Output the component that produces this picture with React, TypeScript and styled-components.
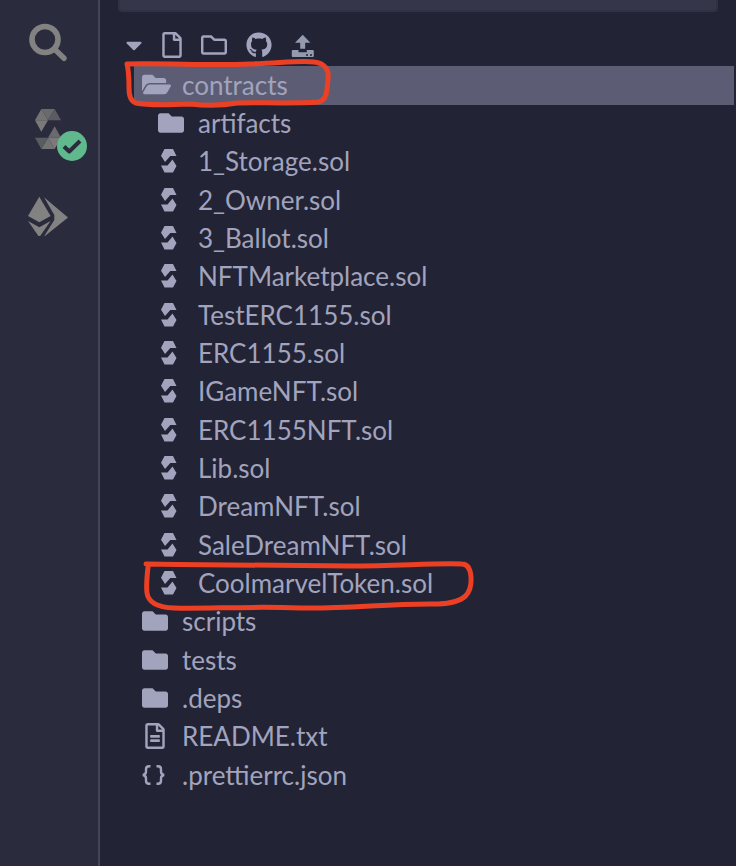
import React from "react";
import styled, { createGlobalStyle } from "styled-components";
import { FaCaretDown, FaFolder, FaFolderOpen, FaGithub, FaRegFile, FaRegFileAlt, FaRegFolder } from "react-icons/fa";

const GlobalStyle = createGlobalStyle`
  * { box-sizing: border-box; }
  body {
    margin: 0;
    background: #222335;
    color: #a2a3bd;
    font-family: "Lato", "Open Sans", sans-serif;
  }
  button { border: 0; background: none; color: inherit; font: inherit; padding: 0; cursor: pointer; }
`;

const Layout = styled.div`
  display: flex;
  min-height: 100vh;
`;

const IconRail = styled.nav`
  display: flex;
  flex-direction: column;
  align-items: flex-start;
  gap: 44px;
  flex: 0 0 100px;
  padding: 22px 0 0 26px;
  background: #2b2b3e;
  border-right: 2px solid #444558;
`;

const RailButton = styled.button`
  position: relative;
  width: 44px;
  height: 42px;
  color: #828282;
  svg { display: block; }
`;

const StatusBadge = styled.span`
  position: absolute;
  left: 31px;
  top: 23px;
  width: 30px;
  height: 30px;
`;

const Explorer = styled.main`
  flex: 1;
  min-width: 0;
`;

const WorkspaceBar = styled.div`
  height: 12px;
  margin: 0 18px;
  background: #35364a;
  border: 2px solid #2d3244;
  border-top: 0;
  border-radius: 0 0 4px 4px;
`;

const Toolbar = styled.div`
  display: flex;
  align-items: center;
  height: 54px;
  padding: 12px 0 0 26px;
`;

const ToolButton = styled.button<{ $width: number; $gap: number }>`
  display: flex;
  justify-content: center;
  width: ${(p) => p.$width}px;
  margin-right: ${(p) => p.$gap}px;
  svg { flex: none; display: block; }
`;

const Tree = styled.ul`
  list-style: none;
  margin: 0;
  padding: 0 2px 0 34px;
`;

const TreeItem = styled.li`
  position: relative;
`;

const TreeRow = styled.button<{ $depth: number; $selected?: boolean }>`
  display: flex;
  align-items: center;
  width: 100%;
  height: 38px;
  padding: 0 0 2px ${(p) => 8 + p.$depth * 16}px;
  background: ${(p) => (p.$selected ? "#5c5d74" : "transparent")};
  font-size: 26px;
  line-height: 36px;
  text-align: left;
  white-space: nowrap;
  ${TreeItem}:nth-child(3n + 1) > & { height: 39px; }
`;

const RowIcon = styled.span`
  display: flex;
  flex: 0 0 40px;
  svg { display: block; }
`;

const Marker = styled.svg`
  position: absolute;
  z-index: 1;
  pointer-events: none;
  fill: none;
  stroke: #ec4025;
  stroke-width: 5;
  stroke-linecap: round;
  stroke-linejoin: round;
`;

const ContractsMarker = styled(Marker)`
  left: -12px;
  top: -10px;
`;

const TokenMarker = styled(Marker)`
  left: 6px;
  top: -8px;
`;

const SearchIcon = () => (
  <svg width="44" height="42" viewBox="26 22 44 42" fill="none" stroke="currentColor">
    <circle cx="45" cy="39.5" r="13" strokeWidth="5.6" />
    <path d="M54.5 49 64 58.3" strokeWidth="5.4" strokeLinecap="round" />
  </svg>
);

const CompilerIcon = () => (
  <svg width="44" height="42" viewBox="26 108 44 42">
    <path fill="#737374" d="M41.3 109 48 120.3H35z" />
    <path fill="#6a6a6e" d="M41.3 109h13.4L48 120.3z" />
    <path fill="#5b5b62" d="M54.7 109 61 120.3H48z" />
    <path fill="#7a7a7a" d="M35 120.3h13l-6.7 11.4z" />
    <path fill="#6a6a6e" d="M54.7 126.3 61 137.7H48z" />
    <path fill="#7a7a7a" d="M61 137.7 54.7 149 48 137.7z" />
    <path fill="#737374" d="M48 137.7 54.7 149H41.3z" />
    <path fill="#5b5b62" d="M35 137.7h13L41.3 149z" />
  </svg>
);

const CheckBadge = () => (
  <svg width="30" height="30" viewBox="0 0 30 30">
    <circle cx="15" cy="15" r="15" fill="#5fb98d" />
    <path d="m7 15.500 5.300 5L23 10" fill="none" stroke="#2b2b3e" strokeWidth="4" strokeLinejoin="round" />
  </svg>
);

const DeployIcon = () => (
  <svg width="44" height="42" viewBox="26 194 44 42" fill="currentColor">
    <path d="M39.300 196.800 50.600 216l-11.300 6.300L28 216z" />
    <path d="m28 221 11.300 6.300L50.600 221l-11.300 16.200z" />
    <path d="M44 197.300 68 217.500 43.700 237l10.600-17v-5z" />
  </svg>
);

const UploadIcon = () => (
  <svg width="24" height="26" viewBox="291 33 24 26" fill="#959baf">
    <path d="m302.700 35.700 7.700 8H305.200v6h-5v-6H295z" />
    <path fillRule="evenodd" d="M292.500 51h6v2.300h8.300V51h6q1 0 1 1v5q0 1-1 1h-20q-1 0-1-1v-5q0-1 1-1zm13.500 4.300v1.500h2v-1.500zm4 0v1.500h2v-1.500z" />
  </svg>
);

const SolidityIcon = () => (
  <svg width="22" height="24" viewBox="-3 0 22 24" fill="currentColor">
    <path d="M3.500 0h8.500l3.500 7H9.300L4 13 0 6.700z" />
    <path d="M11.500 10.500 15.500 17l-3.500 6.500H3.500L0 16.500h6.500z" />
  </svg>
);

const BracesIcon = () => (
  <svg width="24" height="20" viewBox="0 0 24 20" fill="none" stroke="currentColor" strokeWidth="2.400">
    <path d="M8.500 1.300H7q-3 0-3 3v2.500Q4 9.500.8 10q3.200.500 3.200 3.200v2.500q0 3 3 3h1.500" />
    <path d="M14.500 1.300H16q3 0 3 3v2.500q0 2.700 3.200 3.200-3.200.500-3.200 3.200v2.500q0 3-3 3h-1.500" />
  </svg>
);

type Kind = "open" | "folder" | "sol" | "text" | "json";

const icons: Record<Kind, React.ReactNode> = {
  open: <FaFolderOpen size={29} />,
  folder: <FaFolder size={26} />,
  sol: <SolidityIcon />,
  text: <FaRegFileAlt width={20} height={26} />,
  json: <BracesIcon />,
};

const entries: { name: string; kind: Kind; depth: number }[] = [
  { name: "contracts", kind: "open", depth: 0 },
  { name: "artifacts", kind: "folder", depth: 1 },
  ...[
    "1_Storage.sol", "2_Owner.sol", "3_Ballot.sol", "NFTMarketplace.sol", "TestERC1155.sol", "ERC1155.sol",
    "IGameNFT.sol", "ERC1155NFT.sol", "Lib.sol", "DreamNFT.sol", "SaleDreamNFT.sol", "CoolmarvelToken.sol",
  ].map((name) => ({ name, kind: "sol" as Kind, depth: 1 })),
  { name: "scripts", kind: "folder", depth: 0 },
  { name: "tests", kind: "folder", depth: 0 },
  { name: ".deps", kind: "folder", depth: 0 },
  { name: "README.txt", kind: "text", depth: 0 },
  { name: ".prettierrc.json", kind: "json", depth: 0 },
];

export default function App() {
  return (
    <>
      <GlobalStyle />
      <Layout>
        <IconRail aria-label="Plugins">
          <RailButton aria-label="Search"><SearchIcon /></RailButton>
          <RailButton aria-label="Solidity compiler">
            <CompilerIcon />
            <StatusBadge><CheckBadge /></StatusBadge>
          </RailButton>
          <RailButton aria-label="Deploy and run"><DeployIcon /></RailButton>
        </IconRail>
        <Explorer>
          <WorkspaceBar />
          <Toolbar>
            <ToolButton $width={16} $gap={20} aria-label="Collapse"><FaCaretDown size={26} /></ToolButton>
            <ToolButton $width={20} $gap={18} aria-label="New file"><FaRegFile size={26} /></ToolButton>
            <ToolButton $width={28} $gap={18} aria-label="New folder"><FaRegFolder size={26} /></ToolButton>
            <ToolButton $width={26} $gap={19} aria-label="Publish to GitHub"><FaGithub size={26} /></ToolButton>
            <ToolButton $width={24} $gap={0} aria-label="Upload"><UploadIcon /></ToolButton>
          </Toolbar>
          <Tree>
            {entries.map(({ name, kind, depth }) => (
              <TreeItem key={name}>
                <TreeRow $depth={depth} $selected={name === "contracts"}>
                  <RowIcon>{icons[kind]}</RowIcon>
                  {name}
                </TreeRow>
                {name === "contracts" && (
                  <ContractsMarker width="214" height="56" viewBox="122 56 214 56">
                    <path d="M127 64C170 63 210 66 250 64C280 63 302 60 314 62Q330 64 328 79C327 93 326 101 318 102C290 104 255 102 237 103C220 106 208 106 190 104C168 105 145 105 136 103Q129 101 129 88Q129 72 127 64" />
                  </ContractsMarker>
                )}
                {name === "CoolmarvelToken.sol" && (
                  <TokenMarker width="340" height="56" viewBox="140 556 340 56">
                    <path d="M146 563C210 564 270 564 350 565C400 565 430 562 462 563Q470 563 471 576C472 592 466 602 438 603C390 602 350 608 300 607C250 605 205 608 174 607Q149 606 147 592Q146 584 148 566" />
                  </TokenMarker>
                )}
              </TreeItem>
            ))}
          </Tree>
        </Explorer>
      </Layout>
    </>
  );
}
